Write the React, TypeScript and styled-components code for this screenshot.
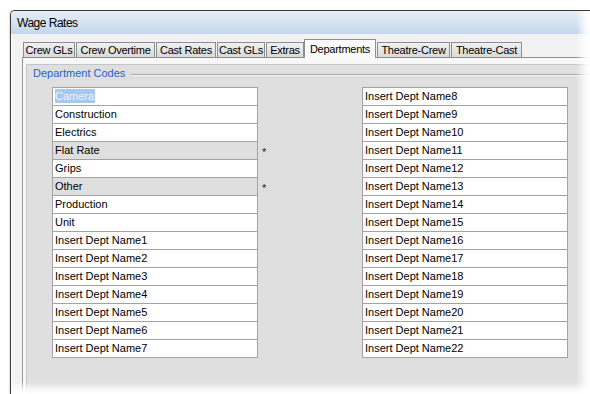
import React from 'react';
import styled, { createGlobalStyle } from 'styled-components';

const Global = createGlobalStyle`
  html, body { margin: 0; padding: 0; background: #ffffff; }
  body { font-family: "Liberation Sans", Arial, sans-serif; }
  * { box-sizing: border-box; }
`;

const Page = styled.div`
  width: 590px;
  height: 394px;
  overflow: hidden;
  background: #ffffff;
  padding: 10px 0 0 10px;
`;

const Window = styled.div`
  position: relative;
  width: 580px;
  height: 384px;
  border-left: 1px solid #3c3c3c;
  border-top: 1px solid #3c3c3c;
  border-top-left-radius: 5px;
  background: #f2f2f2;
  display: flex;
  flex-direction: column;
  overflow: hidden;
  box-shadow: -1px 0 1px rgba(0, 0, 0, 0.12);
`;

const TitleBar = styled.div`
  height: 23px;
  flex: none;
  padding: 4px 0 0 6px;
  line-height: 17px;
  font-size: 12px;
  letter-spacing: -0.5px;
  color: #000;
  background: linear-gradient(to bottom, #e6edf6 0%, #d6e3f2 50%, #c2d6ec 100%);
`;

const Body = styled.div`
  flex: 1;
  display: flex;
  flex-direction: column;
  padding: 5px 0 0 10px;
  border-left: 1px solid #ffffff;
`;

const TabStrip = styled.div`
  height: 18px;
  flex: none;
  display: flex;
  align-items: flex-end;
  gap: 1px;
  padding-left: 1px;
  position: relative;
  z-index: 1;
`;

const Tab = styled.div<{ $w: number; $active?: boolean }>`
  width: ${(p) => p.$w}px;
  height: ${(p) => (p.$active ? 19 : 15)}px;
  margin-bottom: ${(p) => (p.$active ? -1 : 0)}px;
  margin-left: ${(p) => (p.$active ? -1 : 0)}px;
  border: 1px solid #8d8e8f;
  border-bottom: none;
  background: ${(p) =>
    p.$active ? '#fbfbfb' : 'linear-gradient(to bottom, #f0f0f0 0%, #e4e4e4 55%, #d9d9d9 100%)'};
  font-size: 11px;
  letter-spacing: -0.25px;
  line-height: 14px;
  padding-top: ${(p) => (p.$active ? 2 : 0)}px;
  text-align: center;
  color: #000;
  white-space: nowrap;
`;

const Panel = styled.div`
  flex: 1;
  display: flex;
  flex-direction: column;
  border-top: 1px solid #8d8e8f;
  border-left: 1px solid #9a9a9a;
  background: #f7f7f7;
  padding: 6px 0 0 3px;
`;

const Inner = styled.div`
  flex: 1;
  background: #dfdfdf;
  border-top: 1px solid #c6c6c6;
  border-left: 1px solid #c6c6c6;
  padding: 1px 0 0 6px;
  display: flex;
  flex-direction: column;
`;

const LegendRow = styled.div`
  display: flex;
  align-items: flex-start;
  height: 14px;
`;

const LegendText = styled.span`
  font-size: 11px;
  line-height: 14px;
  color: #1f5fc9;
  white-space: nowrap;
`;

const LegendLine = styled.div`
  flex: 1;
  margin: 8px 0 0 6px;
  height: 2px;
  border-top: 1px solid #a9a9a9;
  border-bottom: 1px solid #f4f4f4;
`;

const ListsRow = styled.div`
  display: grid;
  grid-template-columns: 206px 104px 206px;
  margin-top: 7px;
  padding-left: 19px;
`;

const ListBox = styled.div`
  border-top: 1px solid #a3a3a3;
  border-left: 1px solid #a3a3a3;
  border-right: 1px solid #a3a3a3;
  display: flex;
  flex-direction: column;
`;

const Cell = styled.div<{ $shaded?: boolean }>`
  height: 18px;
  border-bottom: 1px solid #a3a3a3;
  background: ${(p) => (p.$shaded ? '#dfdfdf' : '#ffffff')};
  padding-left: 2px;
  font-size: 11px;
  line-height: 17px;
  color: #000;
  white-space: nowrap;
`;

const Selected = styled.span`
  display: inline-block;
  background: #a6c9ef;
  color: #eef4fc;
  line-height: 14px;
  height: 14px;
  padding: 0 1px 0 0;
`;

const MarkerColumn = styled.div`
  display: flex;
  flex-direction: column;
  padding-top: 1px;
`;

const Marker = styled.div`
  height: 18px;
  padding: 2px 0 0 4px;
  font-size: 11px;
  line-height: 17px;
  color: #1a1a1a;
`;

const FadeRight = styled.div`
  position: absolute;
  top: -1px;
  right: 0;
  bottom: 0;
  width: 14px;
  background: linear-gradient(to right, rgba(255, 255, 255, 0) 0%, rgba(255, 255, 255, 0.85) 70%, #ffffff 100%);
  z-index: 5;
`;

const FadeBottom = styled.div`
  position: absolute;
  left: -1px;
  right: 0;
  bottom: 0;
  height: 12px;
  background: linear-gradient(to bottom, rgba(255, 255, 255, 0) 0%, rgba(255, 255, 255, 0.85) 65%, #ffffff 100%);
  z-index: 5;
`;

const tabs: { label: string; w: number; active?: boolean }[] = [
  { label: 'Crew GLs', w: 52 },
  { label: 'Crew Overtime', w: 79 },
  { label: 'Cast Rates', w: 60 },
  { label: 'Cast GLs', w: 48 },
  { label: 'Extras', w: 38 },
  { label: 'Departments', w: 72, active: true },
  { label: 'Theatre-Crew', w: 73 },
  { label: 'Theatre-Cast', w: 71 },
];

const leftItems: { name: string; shaded?: boolean; selected?: boolean; marked?: boolean }[] = [
  { name: 'Camera', selected: true },
  { name: 'Construction' },
  { name: 'Electrics' },
  { name: 'Flat Rate', shaded: true, marked: true },
  { name: 'Grips' },
  { name: 'Other', shaded: true, marked: true },
  { name: 'Production' },
  { name: 'Unit' },
  ...[1, 2, 3, 4, 5, 6, 7].map((n) => ({ name: `Insert Dept Name${n}` })),
];

const rightItems = Array.from({ length: 15 }, (_, i) => `Insert Dept Name${i + 8}`);

export default function App() {
  return (
    <Page>
      <Global />
      <Window>
        <TitleBar>Wage Rates</TitleBar>
        <Body>
          <TabStrip>
            {tabs.map((t) => (
              <Tab key={t.label} $w={t.w} $active={t.active}>
                {t.label}
              </Tab>
            ))}
          </TabStrip>
          <Panel>
            <Inner>
              <LegendRow>
                <LegendText>Department Codes</LegendText>
                <LegendLine />
              </LegendRow>
              <ListsRow>
                <ListBox>
                  {leftItems.map((it) => (
                    <Cell key={it.name} $shaded={it.shaded}>
                      {it.selected ? <Selected>{it.name}</Selected> : it.name}
                    </Cell>
                  ))}
                </ListBox>
                <MarkerColumn>
                  {leftItems.map((it) => (
                    <Marker key={it.name}>{it.marked ? '*' : ''}</Marker>
                  ))}
                </MarkerColumn>
                <ListBox>
                  {rightItems.map((name) => (
                    <Cell key={name}>{name}</Cell>
                  ))}
                </ListBox>
              </ListsRow>
            </Inner>
          </Panel>
        </Body>
        <FadeRight />
        <FadeBottom />
      </Window>
    </Page>
  );
}
